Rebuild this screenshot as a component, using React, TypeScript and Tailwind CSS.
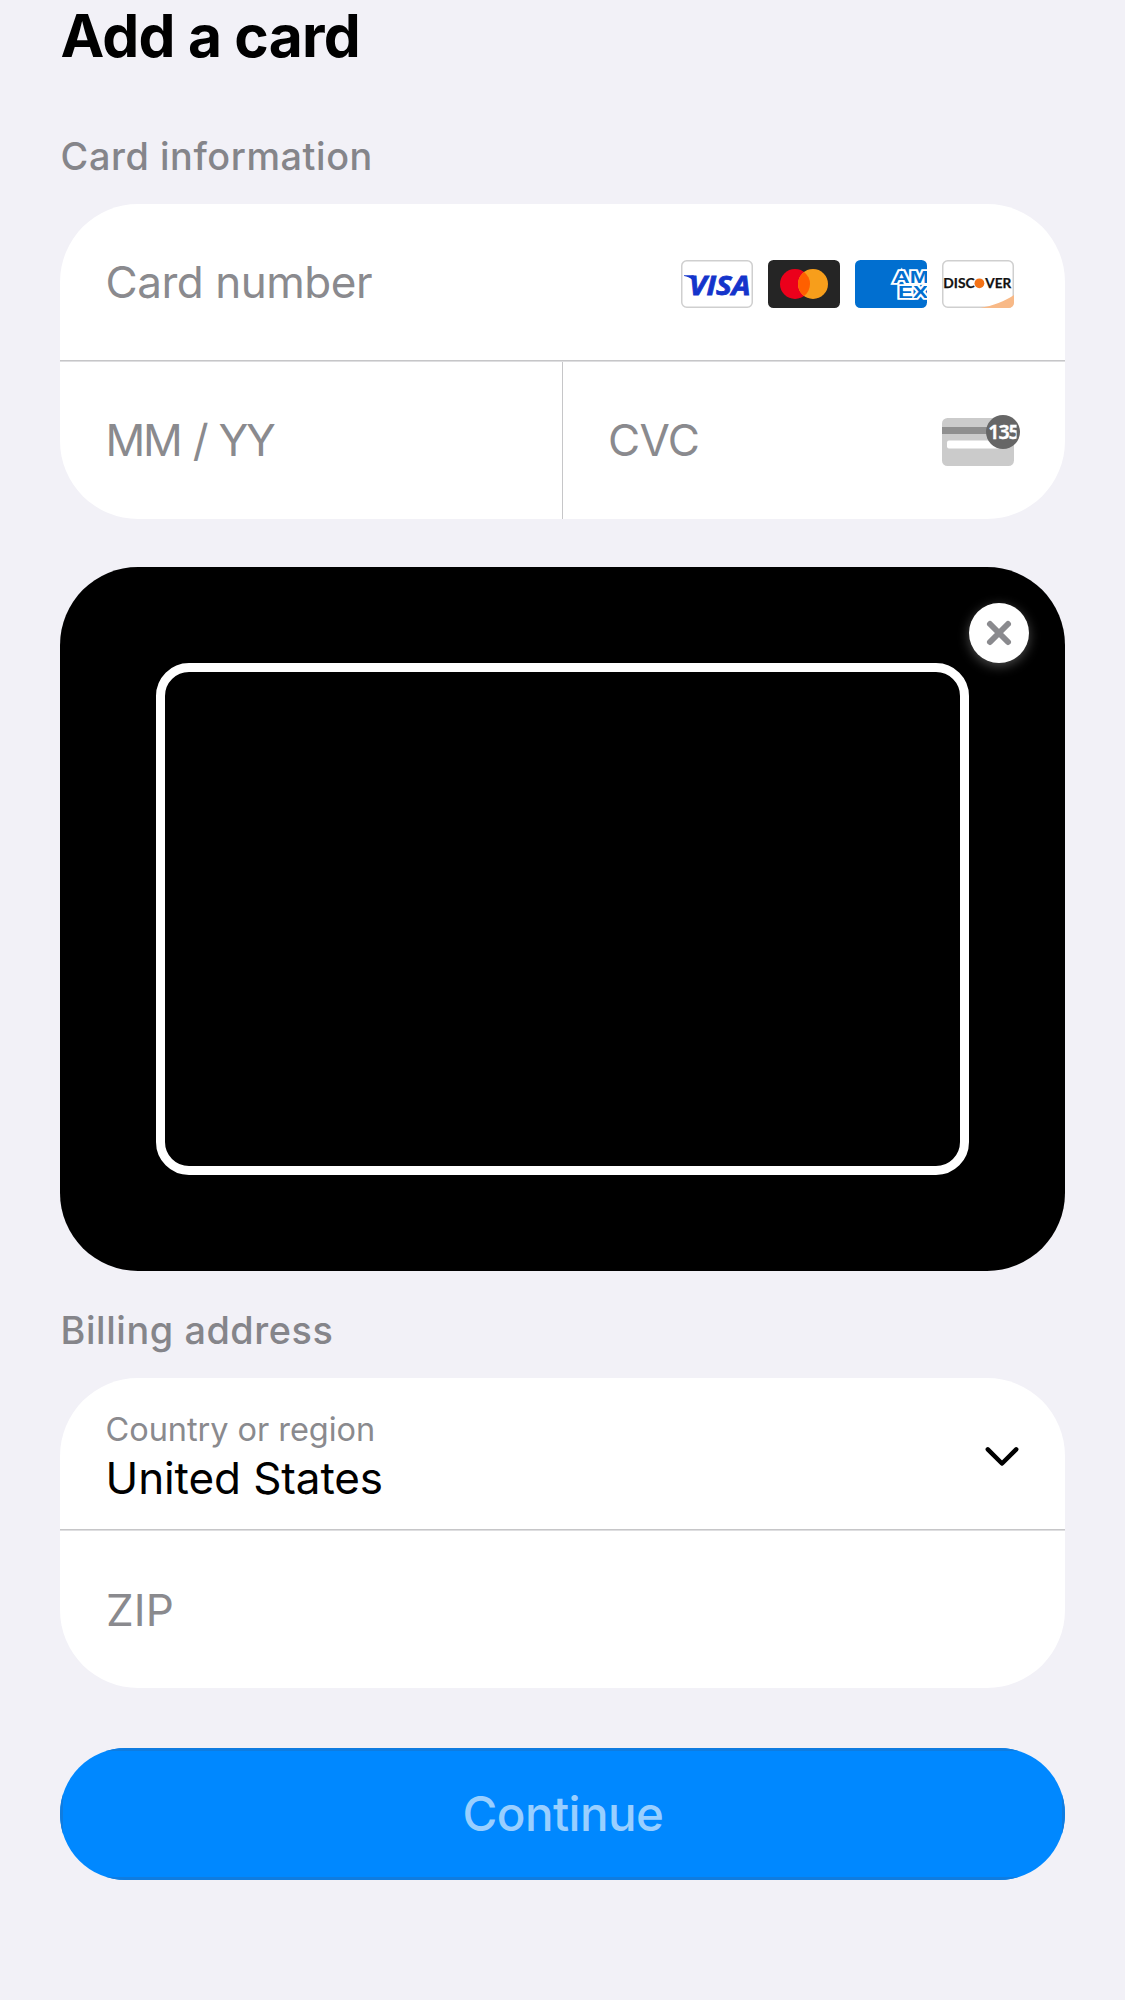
import type { ReactNode } from 'react';

function VisaIcon() {
  return (
    <svg width="72" height="48" viewBox="0 0 72 48" aria-label="Visa">
      <rect x="0.75" y="0.75" width="70.5" height="46.5" rx="5" fill="#fff" stroke="#cfcfcf" strokeWidth="1.5" />
      <path d="M3 15.3h8.200c1.400 0 2.400.6 2.700 2l1.900 9.500C13.500 20.500 9.500 17.200 3 16z" fill="#1434cb" />
      <text x="8" y="35" fontFamily="'Open Sans', sans-serif" fontWeight="700" fontStyle="italic" fontSize="27.6" fill="#1434cb" stroke="#1434cb" strokeWidth="0.8" textLength="61.500" lengthAdjust="spacingAndGlyphs">
        VISA
      </text>
    </svg>
  );
}

function MastercardIcon() {
  return (
    <svg width="72" height="48" viewBox="0 0 72 48" aria-label="Mastercard">
      <rect width="72" height="48" rx="5.500" fill="#252525" />
      <circle cx="27" cy="24" r="15" fill="#eb001b" />
      <circle cx="45" cy="24" r="15" fill="#f79e1b" />
      <path d="M36 12a15 15 0 0 1 0 24a15 15 0 0 1 0-24z" fill="#ff5f00" />
    </svg>
  );
}

function AmexIcon() {
  return (
    <svg width="72" height="48" viewBox="0 0 72 48" aria-label="American Express">
      <rect width="72" height="48" rx="5.500" fill="#016fd0" />
      <g fontFamily="'Liberation Sans', sans-serif" fontWeight="700" fill="#016fd0" stroke="#fff" strokeWidth="3.400" strokeLinejoin="miter" style={{ paintOrder: 'stroke' }}>
        <text x="43" y="38" fontSize="17" textLength="30" lengthAdjust="spacingAndGlyphs">EX</text>
        <text x="38" y="22.600" fontSize="17" textLength="36" lengthAdjust="spacingAndGlyphs">AM</text>
      </g>
    </svg>
  );
}

function DiscoverIcon() {
  return (
    <svg width="72" height="48" viewBox="0 0 72 48" aria-label="Discover">
      <rect x="0.75" y="0.75" width="70.500" height="46.500" rx="5" fill="#fff" stroke="#cfcfcf" strokeWidth="1.5" />
      <path d="M38 48C51 46 63 41 72 35v7.500a5.500 5.500 0 0 1-5.500 5.500z" fill="#f8b987" />
      <g fontFamily="Lato, sans-serif" fontWeight="700" fontSize="13.700" fill="#111" stroke="#111" strokeWidth="0.25">
        <text x="1.300" y="28" textLength="31.300" lengthAdjust="spacingAndGlyphs">DISC</text>
        <text x="43.300" y="28" textLength="26" lengthAdjust="spacingAndGlyphs">VER</text>
      </g>
      <circle cx="37.400" cy="23.300" r="4.900" fill="#f47216" />
    </svg>
  );
}

function CvcIcon() {
  return (
    <svg width="78" height="54" viewBox="0 0 78 54" aria-label="Security code">
      <rect y="4" width="72" height="48" rx="5.500" fill="#cbcbcb" />
      <rect y="13" width="72" height="7" fill="#8f8f8f" />
      <rect x="5" y="26.500" width="58" height="8" rx="2" fill="#fff" />
      <circle cx="61" cy="18" r="17" fill="#666" />
      <clipPath id="badge-digits">
        <rect x="44" y="6" width="30.600" height="24" />
      </clipPath>
      <text x="46.200" y="25" clipPath="url(#badge-digits)" fontFamily="'Noto Sans', sans-serif" fontWeight="600" fontSize="19.600" letterSpacing="-1" fill="#fff" stroke="#fff" strokeWidth="0.4">
        135
      </text>
    </svg>
  );
}

function Rule() {
  return <div className="h-[2px] border-t border-[#c6c6c8] bg-[#dedee0]" />;
}

function SectionTitle({ children }: { children: ReactNode }) {
  return (
    <h2 className="pl-[0.6px] text-[37.8px] leading-[46px] font-medium tracking-[0.58px] text-[#85858a]">{children}</h2>
  );
}

export default function App() {
  return (
    <main className="h-[2000px] w-full overflow-hidden bg-[#f2f1f7] px-[60px] pt-[5px] font-['Inter',sans-serif] text-black">
      <h1 className="pl-[0.6px] text-[58.7px] leading-[61px] font-bold tracking-[-0.76px]">Add a card</h1>

      <section className="mt-[67px]">
        <SectionTitle>Card information</SectionTitle>
        <div className="mt-[25px] overflow-hidden rounded-[78px] bg-white text-[44px] leading-[54px] text-[#8a8a8e]">
          <div className="flex h-[156px] items-start justify-between pr-[51px] pl-[45.5px]">
            <span className="mt-[51px] tracking-[-0.46px]">Card number</span>
            <div className="mt-14 flex gap-[15px]">
              <VisaIcon />
              <MastercardIcon />
              <AmexIcon />
              <DiscoverIcon />
            </div>
          </div>
          <Rule />
          <div className="flex h-[157px]">
            <div className="w-[503px] border-r border-[#c6c6c8] pt-[51px] pl-[45.5px]">
              <span className="tracking-[-2.3px] [word-spacing:2.2px]">MM / YY</span>
            </div>
            <div className="flex flex-1 items-start justify-between pr-[45px] pl-[45px]">
              <span className="mt-[51px] tracking-[-0.6px]">CVC</span>
              <div className="mt-[52px]">
                <CvcIcon />
              </div>
            </div>
          </div>
        </div>
      </section>

      <div className="relative mt-12 h-[704px] rounded-[78px] bg-black px-24 pt-24">
        <div className="h-[512px] rounded-[33px] border-[9px] border-white" />
        <button
          aria-label="Close scanner"
          className="absolute top-9 right-9 flex size-[60px] items-center justify-center rounded-full bg-white shadow-[0_3px_12px_rgba(255,255,255,0.3)]"
        >
          <svg width="30" height="30" viewBox="0 0 30 30" fill="none" stroke="#8a8a8e" strokeWidth="6" strokeLinecap="round">
            <path d="M6 6l18 18M24 6L6 24" />
          </svg>
        </button>
      </div>

      <section className="mt-9">
        <SectionTitle>Billing address</SectionTitle>
        <div className="mt-[25px] overflow-hidden rounded-[78px] bg-white">
          <div className="flex h-[151px] items-start justify-between pr-[45px] pl-[45.5px]">
            <div className="mt-8 flex flex-col gap-[2px]">
              <span className="text-[32.5px] leading-[39px] tracking-[-0.05px] text-[#8a8a8e]">Country or region</span>
              <span className="text-[44px] leading-[54px] tracking-[-0.1px]">United States</span>
            </div>
            <svg className="mt-[66px]" width="36" height="24" viewBox="0 0 36 24" fill="none" stroke="#000" strokeWidth="4.5" strokeLinecap="round" strokeLinejoin="round">
              <path d="M3.800 5.300L18 19.500L32.200 5.300" />
            </svg>
          </div>
          <Rule />
          <div className="h-[157px] pt-[52px] pl-[46px] text-[44px] leading-[54px] tracking-[0.1px] text-[#8a8a8e]">ZIP</div>
        </div>
      </section>

      <button className="mt-[60px] block h-[132px] w-full overflow-hidden rounded-full bg-[#0088ff]">
        <span className="block h-full border-[3px] border-[#0f7ce0] pt-[34px] pl-[1px] text-center text-[47.5px] leading-[57px] font-medium tracking-[-0.55px] text-[#99cfff]">
          Continue
        </span>
      </button>
    </main>
  );
}
